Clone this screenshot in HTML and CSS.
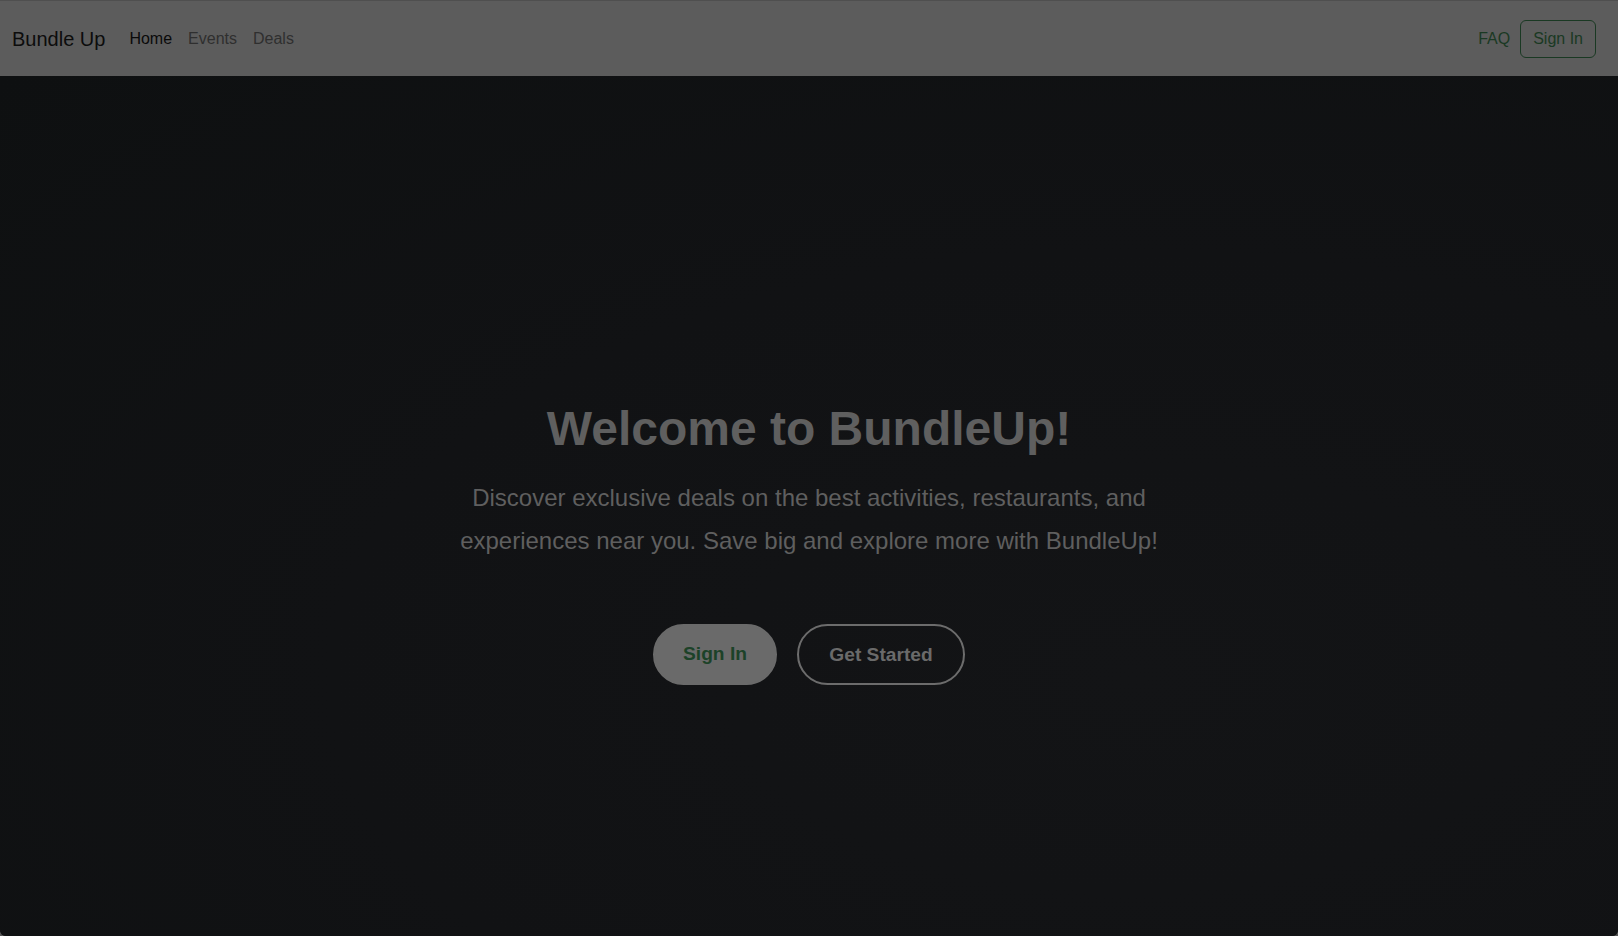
FILE: index.html
```html
<!DOCTYPE html>
<html lang="en">
<head>
<meta charset="utf-8">
<title>BundleUp</title>
<link rel="stylesheet" href="styles.css">
</head>
<body>
<div class="page">
  <nav class="navbar">
    <div class="nav-left">
      <a class="brand" href="#">Bundle Up</a>
      <ul class="nav-links">
        <li><a class="nav-link active" href="#">Home</a></li>
        <li><a class="nav-link" href="#">Events</a></li>
        <li><a class="nav-link" href="#">Deals</a></li>
      </ul>
    </div>
    <div class="nav-right">
      <a class="nav-link faq" href="#">FAQ</a>
      <a class="btn-outline" href="#">Sign In</a>
    </div>
  </nav>
  <main class="hero">
    <h1 class="hero-title">Welcome to BundleUp!</h1>
    <p class="hero-text">Discover exclusive deals on the best activities, restaurants, and experiences near you. Save big and explore more with BundleUp!</p>
    <div class="hero-actions">
      <a class="pill pill-solid" href="#">Sign In</a>
      <a class="pill pill-outline" href="#">Get Started</a>
    </div>
  </main>
</div>
</body>
</html>
```
FILE: styles.css
```css
html, body {
  margin: 0;
  padding: 0;
  height: 100%;
  background: #555555;
}
body {
  font-family: "Liberation Sans", Arial, sans-serif;
}
a { text-decoration: none; }
.page {
  height: 936px;
  display: flex;
  flex-direction: column;
  overflow: hidden;
  border-bottom-left-radius: 6px;
  border-bottom-right-radius: 6px;
  background: #111214;
}
.navbar {
  box-sizing: border-box;
  height: 76px;
  flex: none;
  border-top: 1px solid #4f4f4f;
  background: #5c5c5c;
  display: flex;
  align-items: center;
  justify-content: space-between;
  padding: 1px 22px 0 12px;
}
.nav-left, .nav-right {
  display: flex;
  align-items: center;
}
.brand {
  font-size: 20px;
  line-height: 30px;
  color: #0c0c0c;
  margin-right: 16px;
}
.nav-links {
  list-style: none;
  margin: 0;
  padding: 0;
  display: flex;
}
.nav-link {
  display: block;
  padding: 8px;
  font-size: 16px;
  line-height: 24px;
  color: #2f2f2f;
}
.nav-link.active { color: #0a0a0a; }
.nav-link.faq {
  color: #1a3923;
  margin-right: 2px;
}
.btn-outline {
  display: inline-block;
  font-size: 16px;
  line-height: 24px;
  padding: 6px 12px;
  color: #1a3923;
  border: 1px solid #1a3923;
  border-radius: 6px;
}
.hero {
  flex: 1;
  display: flex;
  flex-direction: column;
  align-items: center;
  text-align: center;
  padding-top: 324px;
  background: radial-gradient(ellipse at 70% 70%, #131416 0%, #111214 50%, #0e1011 100%);
}
.hero-title {
  margin: 0 0 18px;
  font-size: 48px;
  line-height: 1.2;
  font-weight: 700;
  color: #5f5f5f;
}
.hero-text {
  margin: 0;
  max-width: 720px;
  font-size: 24px;
  line-height: 1.8;
  color: #5f5f5f;
}
.hero-actions {
  margin-top: 62px;
  display: flex;
  gap: 20px;
}
.pill {
  display: inline-block;
  box-sizing: border-box;
  height: 61px;
  font-size: 19.2px;
  font-weight: 700;
  line-height: 57px;
  border-radius: 31px;
  border: 2px solid transparent;
}
.pill-solid {
  width: 124px;
  background: #6a6a6a;
  border-color: #6a6a6a;
  color: #1c4228;
  line-height: 55px;
}
.pill-outline {
  width: 168px;
  border-color: #6c6c6c;
  color: #6a6a6a;
}
```
